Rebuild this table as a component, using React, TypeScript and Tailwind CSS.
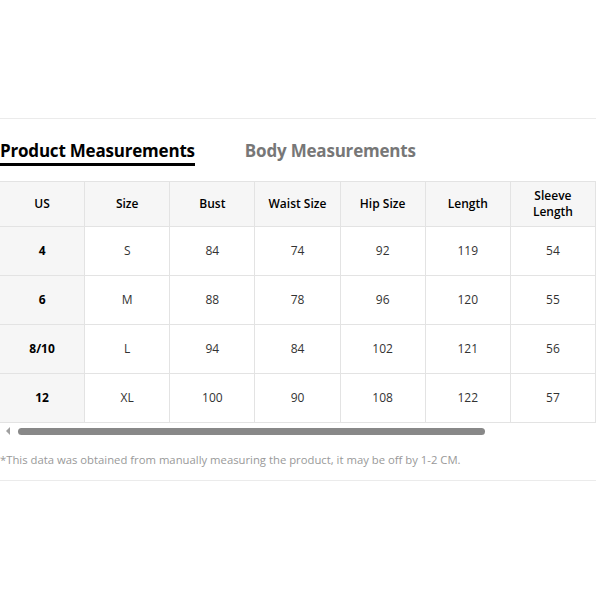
import React from "react";

const headers = ["US", "Size", "Bust", "Waist Size", "Hip Size", "Length", "Sleeve Length"];
const rows = [
  ["4", "S", "84", "74", "92", "119", "54"],
  ["6", "M", "88", "78", "96", "120", "55"],
  ["8/10", "L", "94", "84", "102", "121", "56"],
  ["12", "XL", "100", "90", "108", "122", "57"],
];

export default function App() {
  return (
    <div
      className="w-[596px] h-[596px] bg-white overflow-hidden"
      style={{ fontFamily: '"Open Sans", "Noto Sans", sans-serif' }}
    >
      <div className="h-[118px]" />
      <div className="border-t border-[#ebebeb]" />
      <div className="flex items-end gap-[50px] h-[47px]">
        <div className="text-[17px] font-bold text-black leading-[22px] border-b-[3px] border-black pb-[1px] tracking-[-0.2px]">
          Product Measurements
        </div>
        <div className="text-[17px] font-bold text-[#777] leading-[22px] pb-[4px] tracking-[-0.2px]">
          Body Measurements
        </div>
      </div>
      <div className="h-[15px]" />
      <div className="w-[596px] overflow-hidden">
        <table className="border-collapse table-fixed w-[597px] ml-[-1px] text-[12px] text-[#222]">
          <thead>
            <tr className="h-[45px]">
              {headers.map((h, i) => (
                <th
                  key={i}
                  className="w-[85px] border border-[#e3e3e3] bg-[#f6f6f6] font-semibold text-black text-center leading-[16px] px-1"
                >
                  {h === "Sleeve Length" ? (
                    <>
                      Sleeve
                      <br />
                      Length
                    </>
                  ) : (
                    h
                  )}
                </th>
              ))}
            </tr>
          </thead>
          <tbody>
            {rows.map((r, ri) => (
              <tr key={ri} className="h-[49px]">
                {r.map((c, ci) => (
                  <td
                    key={ci}
                    className={
                      "border border-[#e3e3e3] text-center " +
                      (ci === 0 ? "bg-[#f6f6f6] font-bold text-black" : "bg-white text-[#333]")
                    }
                  >
                    {c}
                  </td>
                ))}
              </tr>
            ))}
          </tbody>
        </table>
      </div>
      <div className="h-[16px] flex items-center relative">
        <svg width="10" height="10" viewBox="0 0 10 10" className="ml-[3px]">
          <polygon points="7,1 7,9 3,5" fill="#a0a0a0" />
        </svg>
        <div className="ml-[5px] w-[467px] h-[7px] rounded-full bg-[#888]" />
      </div>
      <div className="h-[13px]" />
      <div className="text-[11.3px] text-[#999] leading-[16px]">
        *This data was obtained from manually measuring the product, it may be off by 1-2 CM.
      </div>
      <div className="h-[12px]" />
      <div className="border-t border-[#ebebeb]" />
    </div>
  );
}
